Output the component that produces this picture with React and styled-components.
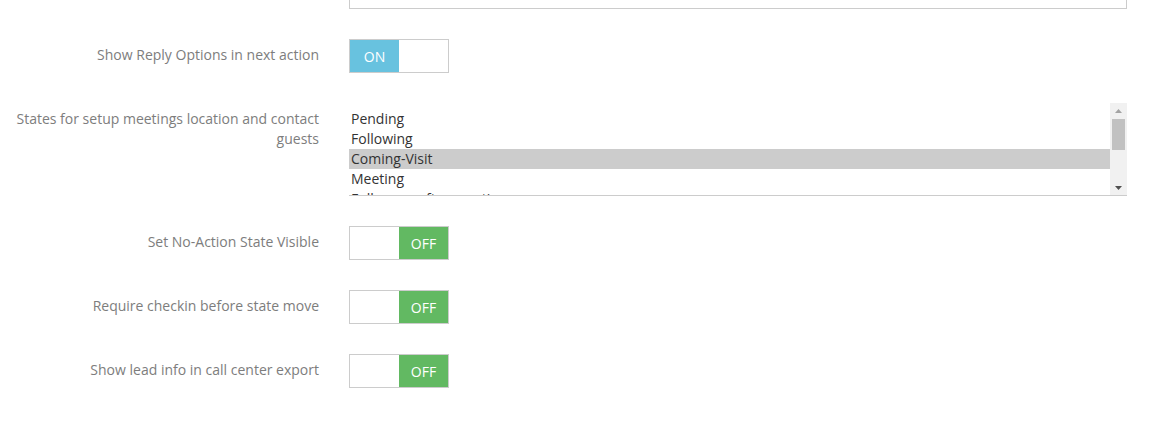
import React from 'react';
import styled, { createGlobalStyle } from 'styled-components';

const GlobalStyle = createGlobalStyle`
  html, body {
    margin: 0;
    padding: 0;
    background: #fff;
    font-family: "Open Sans", "Liberation Sans", sans-serif;
    font-size: 14px;
    overflow: hidden;
  }
`;

// the page is scrolled a little, so the first field sits partly above the top edge
const Form = styled.form`
  margin-top: -25px;
  display: flex;
  flex-direction: column;
  gap: 30px;
`;

const Row = styled.div`
  display: grid;
  grid-template-columns: 319px 778px;
  column-gap: 30px;
  align-items: start;
`;

const Label = styled.label`
  padding: 6px 0 0 15px;
  text-align: right;
  color: #7d7d7d;
  line-height: 20px;
`;

const TextField = styled.div`
  height: 34px;
  box-sizing: border-box;
  border: 1px solid #cccccc;
`;

const Switch = styled.div`
  display: flex;
  width: 100px;
  height: 34px;
  box-sizing: border-box;
  border: 1px solid #cccccc;
`;

const SwitchHalf = styled.span`
  flex: 1;
  display: flex;
  align-items: center;
  justify-content: center;
  color: #fff;
  font-size: 14px;
  background: ${({ $color }) => $color || '#fff'};
`;

const Toggle = ({ on }) => (
  <Switch>
    {on ? (
      <>
        <SwitchHalf $color="#68c2df">ON</SwitchHalf>
        <SwitchHalf />
      </>
    ) : (
      <>
        <SwitchHalf />
        <SwitchHalf $color="#62b962">OFF</SwitchHalf>
      </>
    )}
  </Switch>
);

const ListBox = styled.div`
  display: flex;
  height: 93px;
  box-sizing: border-box;
  border-bottom: 1px solid #cccccc;
  overflow: hidden;
`;

const Options = styled.ul`
  flex: 1;
  list-style: none;
  margin: 0;
  padding: 6px 0 0;
  overflow: hidden;
`;

const Option = styled.li`
  padding: 0 2px;
  line-height: 20px;
  height: 20px;
  color: #333;
  background: ${({ $selected }) => ($selected ? '#cccccc' : 'transparent')};
`;

const ScrollTrack = styled.div`
  width: 17px;
  background: #f1f1f1;
  display: flex;
  flex-direction: column;
  align-items: center;
`;

const ScrollArrow = styled.div`
  height: 15px;
  width: 17px;
  display: flex;
  align-items: center;
  justify-content: center;
`;

const ScrollThumb = styled.div`
  width: 13px;
  height: 31px;
  margin-top: 1px;
  background: #c1c1c1;
`;

const Spacer = styled.div`
  flex: 1;
`;

const states = ['Pending', 'Following', 'Coming-Visit', 'Meeting', 'Follow-up after meeting'];

export default function App() {
  return (
    <>
      <GlobalStyle />
      <Form>
        <Row>
          <div />
          <TextField />
        </Row>
        <Row>
          <Label>Show Reply Options in next action</Label>
          <Toggle on />
        </Row>
        <Row>
          <Label>States for setup meetings location and contact guests</Label>
          <ListBox>
            <Options>
              {states.map((s) => (
                <Option key={s} $selected={s === 'Coming-Visit'}>{s}</Option>
              ))}
            </Options>
            <ScrollTrack>
              <ScrollArrow>
                <svg width="7" height="4" viewBox="0 0 7 4"><path d="M0 4 L3.5 0 L7 4 Z" fill="#a3a3a3" /></svg>
              </ScrollArrow>
              <ScrollThumb />
              <Spacer />
              <ScrollArrow>
                <svg width="7" height="4" viewBox="0 0 7 4"><path d="M0 0 L7 0 L3.5 4 Z" fill="#505050" /></svg>
              </ScrollArrow>
            </ScrollTrack>
          </ListBox>
        </Row>
        <Row>
          <Label>Set No-Action State Visible</Label>
          <Toggle />
        </Row>
        <Row>
          <Label>Require checkin before state move</Label>
          <Toggle />
        </Row>
        <Row>
          <Label>Show lead info in call center export</Label>
          <Toggle />
        </Row>
      </Form>
    </>
  );
}
